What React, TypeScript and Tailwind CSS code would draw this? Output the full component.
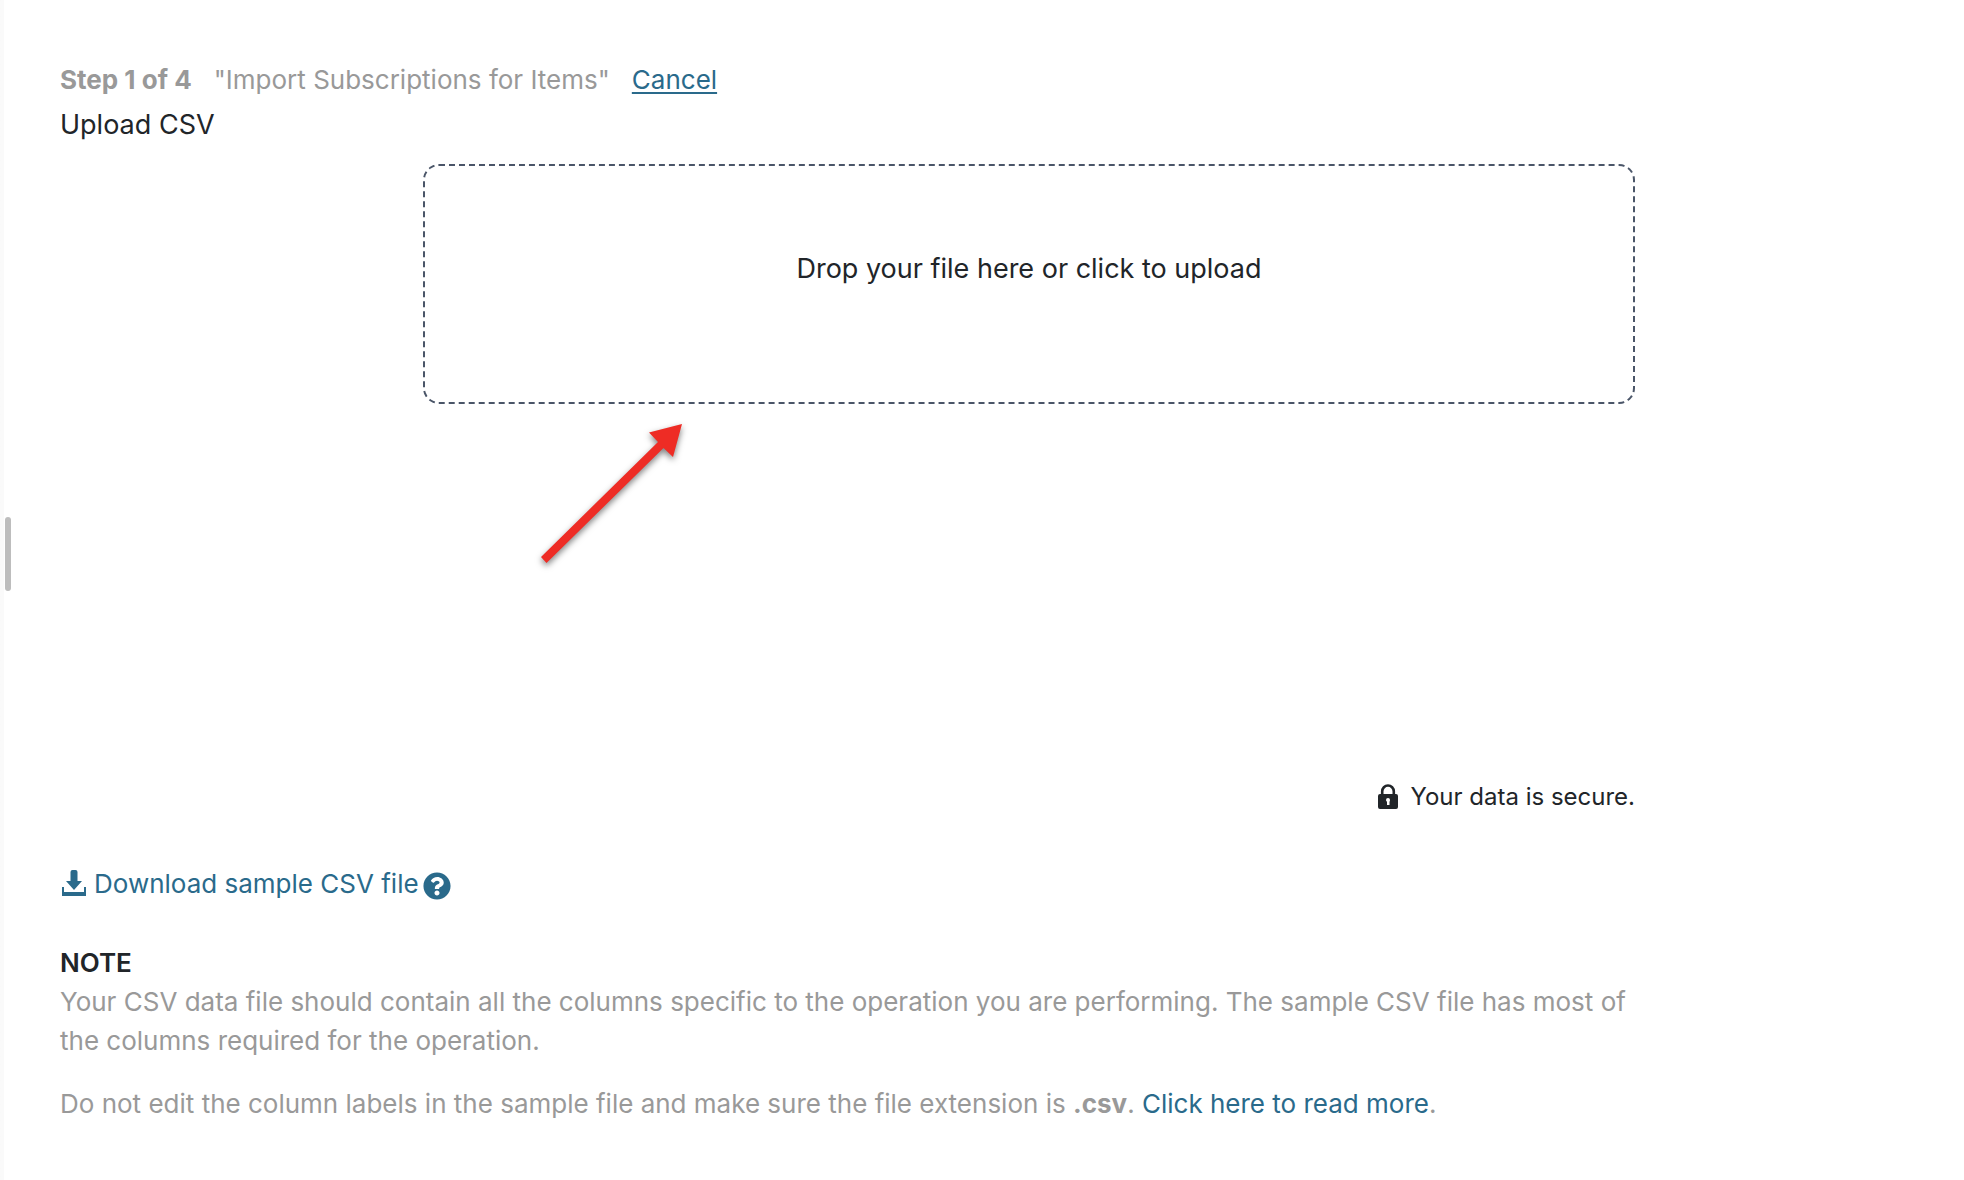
import React, { useState } from 'react';
import { FaQuestionCircle } from 'react-icons/fa';

function DownloadIcon() {
  return (
    <svg className="w-6 h-7 shrink-0" viewBox="0 0 24 28" fill="currentColor" aria-hidden="true">
      <path d="M8.500 2Q8.500 0 10.500 0H13.500Q15.500 0 15.500 2V11H20L12 20L4 11H8.500Z" />
      <path d="M0 17H2V22H22V17H24V26H0Z" />
    </svg>
  );
}

function LockIcon() {
  return (
    <svg className="w-5 h-7 shrink-0" viewBox="0 0 20 28" fill="currentColor" aria-hidden="true">
      <path d="M4.200 13V8.500a5.800 6 0 0 1 11.600 0V13" fill="none" stroke="currentColor" strokeWidth="2.600" />
      <path
        fillRule="evenodd"
        d="M2 11H18Q20 11 20 13V24Q20 26 18 26H2Q0 26 0 24V13Q0 11 2 11ZM10 15A2 2 0 0 0 8 17Q8 18 9 18.700V22H11.500V18.700Q12 18 12 17A2 2 0 0 0 10 15Z"
      />
    </svg>
  );
}

function PointerArrow() {
  return (
    <svg
      className="absolute left-[101px] top-[244px] w-40 h-40 pointer-events-none overflow-visible drop-shadow-[0_3px_3px_rgba(0,0,0,0.5)]"
      viewBox="0 0 160 160"
      aria-hidden="true"
    >
      <path d="M158 16L149 49L139.500 40L22.500 155L17 149L134 34L125 24.500Z" fill="#ee2c25" />
    </svg>
  );
}

export default function App() {
  const [fileName, setFileName] = useState('');

  const handleFile = (e: React.ChangeEvent<HTMLInputElement>) => {
    setFileName(e.target.files?.[0]?.name ?? '');
  };

  return (
    <div className="flex min-h-screen bg-white font-['Inter',sans-serif] text-[26px] leading-[39px] text-[#212529]">
      {/* Resize handle */}
      <div className="w-3 shrink-0 flex items-center bg-linear-to-r from-[#fafafa] from-30% to-white to-30%">
        <div className="ml-[5px] mt-[-72px] w-1.5 h-[74px] rounded-full bg-[#bdbdbd]" />
      </div>

      <main className="flex-1 pl-12 pr-[329px] pt-[60px] pb-14">
        {/* Header */}
        <header>
          <div className="flex items-center gap-[22px] text-[#999]">
            <strong className="font-bold">Step 1 of 4</strong>
            <span>"Import Subscriptions for Items"</span>
            <a href="#cancel" className="text-[#2a6a8b] underline underline-offset-3 decoration-2">Cancel</a>
          </div>
          <h1 className="mt-[5px] text-[27px] leading-[42px]">Upload CSV</h1>
        </header>

        {/* Drop zone */}
        <div className="relative mt-[18px] ml-[363px]">
          <label
            htmlFor="csv-file"
            className="flex h-60 justify-center pt-[82px] border-2 border-dashed border-[#4a5568] rounded-2xl text-[27px] leading-[42px] cursor-pointer"
          >
            {fileName || 'Drop your file here or click to upload'}
          </label>
          <input id="csv-file" type="file" accept=".csv" className="sr-only" onChange={handleFile} />
          <PointerArrow />
        </div>

        <div className="mt-[373px] flex items-center justify-end gap-3 text-2xl leading-10">
          <LockIcon />
          <span>Your data is secure.</span>
        </div>

        <div className="mt-[47px] pl-0.5 flex items-center text-[#2a6a8b]">
          <a href="#sample" className="flex items-center gap-2">
            <DownloadIcon />
            Download sample CSV file
          </a>
          <button type="button" aria-label="Help" className="ml-1 mt-1">
            <FaQuestionCircle className="size-7" />
          </button>
        </div>

        {/* Note */}
        <section className="mt-10 text-[#999]">
          <h2 className="font-semibold text-[#212529]">NOTE</h2>
          <p>
            Your CSV data file should contain all the columns specific to the operation you are performing. The sample
            CSV file has most of the columns required for the operation.
          </p>
          <p className="mt-6">
            Do not edit the column labels in the sample file and make sure the file extension is{' '}
            <strong className="font-bold">.csv</strong>.{' '}
            <a href="#more" className="text-[#2a6a8b]">Click here to read more</a>.
          </p>
        </section>
      </main>
    </div>
  );
}
